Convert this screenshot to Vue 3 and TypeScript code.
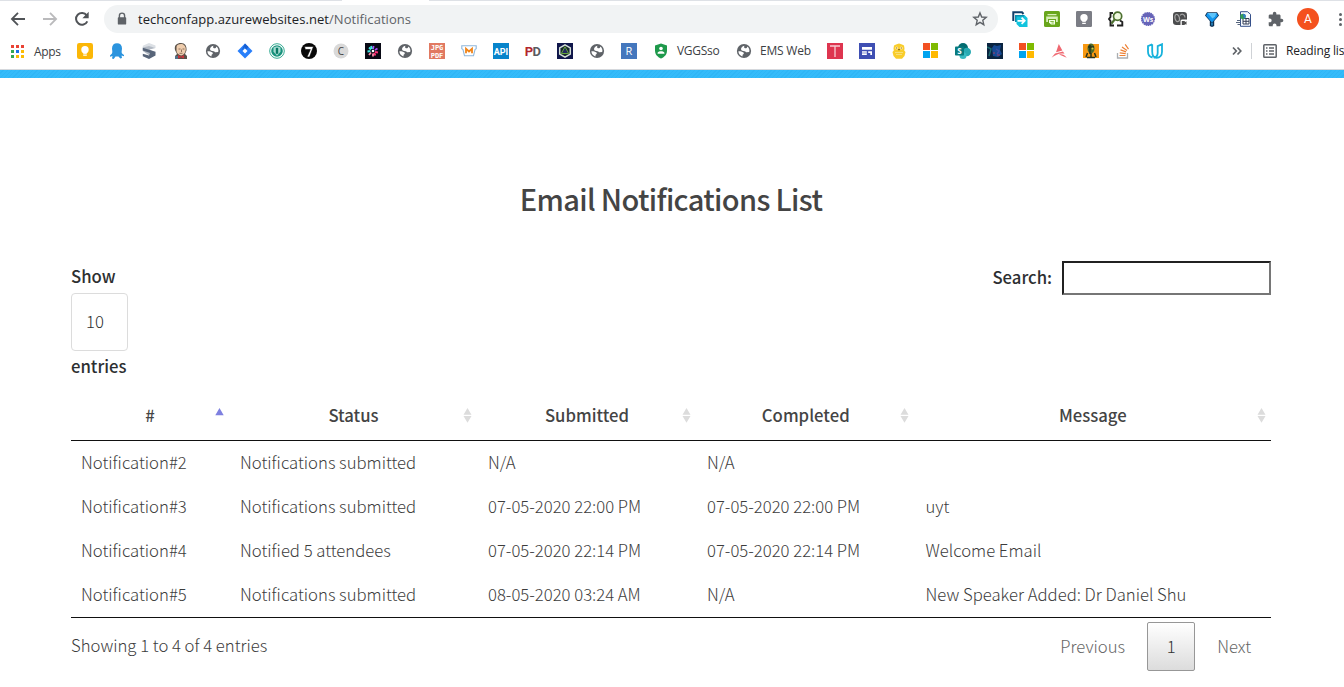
<script setup lang="ts">
interface Notification {
  id: string
  status: string
  submitted: string
  completed: string
  message: string
}

const columns = [
  { label: '#', cls: 'c-id', sorted: true },
  { label: 'Status', cls: 'c-status', sorted: false },
  { label: 'Submitted', cls: 'c-date', sorted: false },
  { label: 'Completed', cls: 'c-done', sorted: false },
  { label: 'Message', cls: 'c-msg', sorted: false },
]

const rows: Notification[] = [
  { id: 'Notification#2', status: 'Notifications submitted', submitted: 'N/A', completed: 'N/A', message: '' },
  { id: 'Notification#3', status: 'Notifications submitted', submitted: '07-05-2020 22:00 PM', completed: '07-05-2020 22:00 PM', message: 'uyt' },
  { id: 'Notification#4', status: 'Notified 5 attendees', submitted: '07-05-2020 22:14 PM', completed: '07-05-2020 22:14 PM', message: 'Welcome Email' },
  { id: 'Notification#5', status: 'Notifications submitted', submitted: '08-05-2020 03:24 AM', completed: 'N/A', message: 'New Speaker Added: Dr Daniel Shu' },
]

const appDots = ['#ea4335', '#ea4335', '#ea4335', '#34a853', '#1a73e8', '#fbbc04', '#34a853', '#fbbc04', '#fbbc04']
</script>

<template>
  <div class="window">
    <svg width="0" height="0" class="defs">
      <symbol id="globe" viewBox="0 0 16 16">
        <circle cx="8" cy="8" r="7.1" fill="#5f6368" />
        <path d="M8.500 2.800C6 3.300 5 4.800 5 6.300 5.300 8 7 8.200 8.600 8.200c1 .1 1 1 2 1.100L13.200 9C13.900 7 13 4.500 11.300 3.500 11.300 5 10 5.500 9 5.300 7.900 5 7.900 3.500 8.500 2.800Z M2.400 8.300C4 8.200 6 8.500 7.500 9.500 8.200 10.300 7.700 11.300 6.800 11.500 6.400 12 6.800 12.800 6.300 13.400 4 12.700 2.400 10.800 2.400 8.300Z" fill="#fff" />
      </symbol>
      <symbol id="msft" viewBox="0 0 16 16">
        <path d="M0 0h7v7H0z" fill="#f25022" /><path d="M8 0h7v7H8z" fill="#7fba00" />
        <path d="M0 8h7v7H0z" fill="#00a4ef" /><path d="M8 8h7v7H8z" fill="#ffb900" />
      </symbol>
    </svg>

    <div class="tab-edge"><i class="edge-left"></i><i class="edge-right"></i></div>
    <header class="toolbar">
      <div class="nav">
        <svg viewBox="0 0 16 16"><path d="M15 8H2M8 1.800 1.900 8 8 14.200" fill="none" stroke="#505357" stroke-width="1.800" /></svg>
        <svg viewBox="0 0 16 16"><path d="M1 8h13M8 1.800 14.100 8 8 14.200" fill="none" stroke="#bababc" stroke-width="1.800" /></svg>
        <svg viewBox="0 0 16 16"><path d="M13.300 10.300A5.900 5.900 0 1 1 12.700 4.300" fill="none" stroke="#505357" stroke-width="2" /><path d="M14.700.8v6.400H8.400z" fill="#505357" /></svg>
      </div>
      <div class="omnibox">
        <svg class="lock" viewBox="0 0 10 14"><path d="M2.400 6V3.700a2.600 2.600 0 0 1 5.200 0V6" fill="none" stroke="#5f6368" stroke-width="1.400" /><rect x=".8" y="5.200" width="8.400" height="7.400" rx=".9" fill="#5f6368" /></svg>
        <span class="url">techconfapp.azurewebsites.net<span class="path">/Notifications</span></span>
        <svg class="star" viewBox="0 0 16 16"><path d="M8 1.900 9.700 6l4.500.4-3.400 2.900 1 4.400L8 11.400l-3.800 2.300 1-4.400L1.800 6.400 6.300 6z" fill="none" stroke="#5f6368" stroke-width="1.400" /></svg>
      </div>
      <div class="extensions">
        <svg viewBox="0 0 16 16"><path d="M1.300 10V1.300H10L11.500 3" fill="none" stroke="#123f69" stroke-width="2" /><path d="M3 4h9.500L15.500 7v9H7.500L4.500 13V11H3z" fill="#12c4de" /><path d="M3 4h9v1.500H4.500V11H3z" fill="#0b8fb0" /><path d="M5.500 9.800h7M9.600 6.700l3.100 3.100-3.100 3.100" fill="none" stroke="#fff" stroke-width="1.800" /></svg>
        <svg viewBox="0 0 16 16"><rect width="16" height="16" rx="1.500" fill="#69a61c" /><path d="M3.500 3h9v1.300h-9zM2.200 5.500h11.600V11H12V8H4v3H2.200z" fill="#d9efb9" /><path d="M5 9h6v4.500H7L5 11.500z" fill="#f4ffe8" /><path d="M6.300 10.500h3.500M7.500 12h2.300" stroke="#69a61c" stroke-width=".8" /></svg>
        <svg viewBox="0 0 16 16"><rect width="16" height="16" rx="1.200" fill="#7b7d85" /><circle cx="8" cy="6.800" r="3.700" fill="#fff" /><path d="M6.200 9.500h3.600v1.300H6.200zM6.200 11.800h3.600V13H6.200z" fill="#fff" /></svg>
        <svg viewBox="0 0 16 16"><path d="M5 2H2.500v4L1 8l1.500 2v4.500H6M12 9.500l2.300 1.500v3.500H9" fill="none" stroke="#222" stroke-width="1.900" /><circle cx="9.600" cy="5.200" r="4.100" fill="#eff8df" stroke="#4d7030" stroke-width="1.700" /><path d="M6.600 8.500 3.500 12.600" stroke="#4d7030" stroke-width="2.200" /></svg>
        <svg viewBox="0 0 16 16"><circle cx="8" cy="8" r="6.300" fill="#6664b8" stroke="#6664b8" stroke-width="1.500" stroke-dasharray="1.500 .6" /><text x="8" y="10.700" class="glyph ws">Ws</text></svg>
        <svg viewBox="0 0 16 16"><rect x="1" y="1" width="14" height="13" rx="3.200" fill="#4b4c4d" /><ellipse cx="5.200" cy="7" rx="2.200" ry="3.600" transform="rotate(-15 5.200 7)" fill="none" stroke="#a5a5a5" stroke-width="1.200" /><path d="M8 4.500c2-2.500 5-1 5 2" fill="none" stroke="#a5a5a5" stroke-width="1.200" /><rect x="8.500" y="8.500" width="7.500" height="6.500" rx="1.500" fill="#fff" /><path d="M9.800 10h3v1.200l1.700-.9v3.500l-1.700-.9V14h-3z" fill="#4b4c4d" /></svg>
        <svg viewBox="0 0 16 16"><path d="M3 1.200h10L15 4.500 10.200 10v5L8 16l-2.200-1v-5L1 4.500z" fill="#0d2f52" /><path d="M3.500 2h9l1.500 2.700L8.500 11h-1L2 4.700z" fill="#1496ee" /><path d="M3.500 2h9L11 5.500 8.500 7.500z" fill="#5cc4fb" /><path d="M7 11.500h2v3H7z" fill="#2377ac" /></svg>
        <svg viewBox="0 0 16 16"><path d="M4.500.7h7L14.500 3.300v12h-10z" fill="#f7fbff" stroke="#35508a" /><path d="M7 7.500h6V13H7z" fill="#fff" stroke="#353e57" /><path d="M10 7.500V13M7 10.300h6" stroke="#353e57" /><circle cx="7" cy="5.500" r="2.800" fill="#359b55" /><path d="M7 2.700c3 0 3.500 3 1 5z" fill="#3179d0" /><path d="M1 9.500h3.500M0 11.500h4.500M1.500 13.500h3" stroke="#56657e" /></svg>
        <svg viewBox="1 0 23 23"><path d="M20.500 11H19V7c0-1.100-.9-2-2-2h-4V3.500C13 2.120 11.880 1 10.500 1S8 2.120 8 3.500V5H4c-1.100 0-1.990.9-1.990 2v3.800H3.500c1.490 0 2.700 1.210 2.700 2.700s-1.210 2.700-2.700 2.700H2V20c0 1.100.9 2 2 2h3.800v-1.500c0-1.490 1.210-2.700 2.700-2.700s2.700 1.210 2.700 2.700V22H17c1.100 0 2-.9 2-2v-4h1.500c1.380 0 2.500-1.120 2.500-2.500S21.880 11 20.500 11z" fill="#5f6368" /></svg>
      </div>
      <div class="avatar">A</div>
      <div class="kebab"><i></i><i></i><i></i></div>
    </header>

    <nav class="bookmarks">
      <div class="apps"><div class="dots"><i v-for="(c, i) in appDots" :key="i" :style="{ background: c }"></i></div><span>Apps</span></div>
      <div class="marks">
        <svg viewBox="0 0 16 16"><rect width="16" height="16" rx="2.200" fill="#fbb707" /><circle cx="8" cy="6.700" r="3.700" fill="#fff" /><path d="M6.200 9.500h3.600v1.300H6.200zM6.200 11.500h3.600v1.300H6.200z" fill="#fff" /></svg>
        <svg viewBox="0 0 16 16"><path d="M3 5.500C3 2 5 .2 8 .2s5 1.800 5 5.300c0 2-.8 3 0 5l2 1.500v1.300l-2.500-.8.5 2.500-1.700.5L9.500 13.500H6.500l-1.800 2.500-1.700-.5.5-2.500-2.500.8V12.500l2-2c.8-2 0-3 0-5z" fill="#2b94de" /></svg>
        <svg viewBox="0 0 16 16"><path d="M8 0 14.500 2.500V5L8 3.500 1.800 4.800V2.800z" fill="#dce0e5" /><path d="M1.800 4.500 8 3l6.500 2-6 1.500 6 3.500L8 12.200 1.800 8z" fill="#b3bac4" /><path d="m1.800 4.800 12.700 4v3.700L8 16l-6.200-2.700v-2.500L8 12.500 9 10 1.800 7.500z" fill="#586579" /></svg>
        <svg viewBox="0 0 16 16"><path d="M2 7C1 2 4 0 8 0s6 3 5.500 7.500L12 11l2 2v3H2v-3l2-2z" fill="#5a5148" /><path d="M3.500 4c0-2 2-3 4.500-3s4.800 2 4.800 5-1.800 6-4.800 6.500C5.500 12 3.500 10 3.500 8z" fill="#efcdad" /><path d="M5.500 6h2M9.500 6h2M8.500 6.500v2.500M6.500 10.300h3" stroke="#8f725d" /><path d="m5 12 3 1.500 3-1.500v3.500l-3-1.200-3 1.200z" fill="#c9343b" /><path d="M2 13h3v3H2z" fill="#537188" /></svg>
        <svg><use href="#globe" /></svg>
        <svg viewBox="0 0 16 16"><path d="M8 .5 15.500 8 8 15.500.5 8z" fill="#287ffa" /><path d="m8 .5 3.500 3.500L8 7.500V4L4.500 7.500z" fill="#155fd2" /><path d="m8 5.500 2.500 2.500L8 10.500 5.500 8z" fill="#fff" /></svg>
        <svg viewBox="0 0 16 16"><circle cx="8" cy="8" r="7.300" fill="#fff" stroke="#35ab93" stroke-width="1" /><circle cx="8" cy="8" r="5.800" fill="#17927c" /><path d="M4.500 4.500 8 3.200l3.500 1.300v4.200L8 12.700 4.500 8.700z" fill="#a5dad0" /><path d="M6.800 4.800h2.400v6H6.800z" fill="#087965" /></svg>
        <svg viewBox="0 0 16 16"><circle cx="8" cy="8" r="8" fill="#080808" /><path d="M3.500 3.500h9L8.500 14H6l3.300-7.500h-5zM2.500 8h6" fill="#fff" stroke="#080808" stroke-width=".6" /></svg>
        <svg viewBox="0 0 16 16"><circle cx="8" cy="8" r="7.500" fill="#d9d9d9" /><text x="8" y="11.500" class="glyph cc">C</text></svg>
        <svg viewBox="0 0 16 16"><path d="M0 0h16v16H0z" fill="#080914" /><g stroke-width="1.800"><path d="m8 6 .6-3M10 7l2.500-1.500" stroke="#b04fff" /><path d="m10 9 3 .5M9 10l1.500 2.500" stroke="#ff3478" /><path d="M8 10.500v3M6 9.500 4 12" stroke="#ff8cab" /><path d="m5.500 8-3 .5M6 6.500 4 4.500M7 6 6 3" stroke="#42e7e3" /></g><circle cx="8" cy="8" r="1.300" fill="#fff" /></svg>
        <svg><use href="#globe" /></svg>
        <svg viewBox="0 0 16 16"><path d="M0 0h16v16H0z" fill="#e17961" /><text x="8" y="7" class="glyph tiny">JPG</text><text x="8" y="15" class="glyph tiny">PDF</text></svg>
        <svg viewBox="0 0 16 16"><path d="M.8 2.800h14.400v3l-1.200.7-1.500 6.200h-9L2 6.500.8 5.800z" fill="#fff" stroke="#8eb7dc" stroke-width="1.100" /><path d="M5 10.300V5.800l3 2.700 3-2.700v4.500" fill="none" stroke="#f18418" stroke-width="1.800" /></svg>
        <svg viewBox="0 0 16 16"><path d="M0 0h16v16H0z" fill="#0784cb" /><text x="8" y="12" class="glyph api">API</text></svg>
        <svg viewBox="0 0 16 16"><text x="4" y="13" class="glyph pd red">P</text><text x="11.800" y="13" class="glyph pd">D</text></svg>
        <svg viewBox="0 0 16 16"><path d="M0 0h16v16H0z" fill="#10174b" /><path d="m8 1.800 5.300 3.100v6.200L8 14.200l-5.300-3.100V4.900z" fill="#17282c" stroke="#d5e0d8" stroke-width="1.500" /><path d="m8 3.800 3.700 6.700H4.300z" fill="#222761" stroke="#65a63a" /></svg>
        <svg><use href="#globe" /></svg>
        <svg viewBox="0 0 16 16"><path d="M0 0h16v16H0z" fill="#4477bd" /><text x="8" y="12" class="glyph r">R</text></svg>
        <svg viewBox="0 0 16 16"><path d="m8 .5 6 2v5c0 4-2.500 6.500-6 8-3.500-1.500-6-4-6-8v-5z" fill="#1e994b" /><circle cx="8" cy="5.500" r="1.800" fill="#fff" /><path d="M4.600 10.800V9.900C4.600 7.700 11.400 7.700 11.400 9.900v.9z" fill="#fff" /></svg>
      </div>
      <span class="label vg">VGGSso</span>
      <svg class="ems-icon"><use href="#globe" /></svg>
      <span class="label ems">EMS Web</span>
      <div class="marks">
        <svg viewBox="0 0 16 16"><path d="M0 0h16v16H0z" fill="#de354f" /><path d="M3 3h10M8 3v11" stroke="#f8ccd3" stroke-width="1.300" /></svg>
        <svg viewBox="0 0 16 16"><path d="M0 0h16v16H0z" fill="#3f4fb3" /><path d="M3 4h10v2.700H3zM3 8.300h4.800V12H3zM9.200 8.300H13V12h-1.700V10H9.200z" fill="#fff" /><path d="M3 9.700h4.800v.6H3z" fill="#3f4fb3" /></svg>
        <svg viewBox="0 0 16 16"><path d="M3 2.500 5 1.500 8 .5l3 1 2 1 .5 3-.3 2L14.500 9l-1 4L11 15.700H5L2.500 13l-1-4 1.300-1.500-.3-2z" fill="#f9cd2b" /><circle cx="5.700" cy="5" r="1.500" fill="#ffeaa1" /><circle cx="10.300" cy="5" r="1.500" fill="#ffeaa1" /><path d="M5.700 4.500v1M10.300 4.500v1M7 6.700h2" stroke="#7b5c13" /><path d="M4 9.500h8M5 11.500h6" stroke="#f7df79" /></svg>
        <svg><use href="#msft" /></svg>
        <svg viewBox="0 0 16 16"><circle cx="8" cy="5" r="5" fill="#036c70" /><circle cx="11.800" cy="9" r="4.200" fill="#28aab2" /><circle cx="8" cy="12.500" r="3.500" fill="#37bac1" /><rect y="3.500" width="9" height="9" rx=".8" fill="#087b7f" /><text x="4.500" y="10.800" class="glyph sp">S</text></svg>
        <svg viewBox="0 0 16 16"><path d="M0 0h16v16H0z" fill="#0a2440" /><path d="M5 5 7 2l3 1 4-1-1 5 2 4-4 3-5-1z" fill="#164a94" /><path d="m0 4 4 2-2 7" fill="none" stroke="#1d6b70" stroke-width="1.500" /><path d="m9 6 3 2-2 3" fill="none" stroke="#3f4fa5" stroke-width="1.400" /><path d="M6 10h2M10 12h3" stroke="#a13d67" /></svg>
        <svg><use href="#msft" /></svg>
        <svg viewBox="0 0 16 16"><path d="m7.800 1 3.600 6.500L5 9.300zM4 10.500l8-2 1.500 2.300C8 9.800 5 12 .5 14.800zM8 11.500c3-.8 5.300 0 7.800 3.300z" fill="#ef6871" /></svg>
        <svg viewBox="0 0 16 16"><path d="M0 1h16v14H0z" fill="#f79811" /><ellipse cx="8" cy="5.500" rx="3.500" ry="5" fill="#4d6a2a" /><path d="M5 4h6M8 10v4M4.500 10 3 14M11.500 10l1.500 4M4 14.500h8M7 2v9" fill="none" stroke="#26331e" stroke-width="1.500" /><circle cx="9.500" cy="5.500" r="1" fill="#d0c94a" /></svg>
        <svg viewBox="0 0 16 16"><path d="M2.500 10v5h10v-5" fill="none" stroke="#aaaeb2" stroke-width="1.300" /><g stroke="#ed8135" stroke-width="1.200"><path d="M4.500 12.500h6M4.700 9.800l6 .8M5.500 6.900l5.600 2M7 4l5 3.400M10.200 1.400l3.300 4.700" /></g></svg>
        <svg viewBox="0 0 16 16"><path d="M5.200 1.300 1 3.200v5.600c0 3 1.700 5.200 4.500 5.700M5.200 1.300v7.200c0 4.500 1.500 6.300 4.500 6.300s5.300-2.300 5.300-6V1.200l-4.300 1.900v6.700c0 2.800-1.200 4.500-4 4.700" fill="none" stroke="#16b2dc" stroke-width="1.800" /></svg>
      </div>
      <svg class="more" viewBox="0 0 10 10"><path d="m1 1.500 3.300 3.500L1 8.500M5.500 1.500 8.800 5 5.500 8.500" fill="none" stroke="#5f6368" stroke-width="1.700" /></svg>
      <span class="divider"></span>
      <svg class="list-icon" viewBox="0 0 16 16"><rect x="1.800" y="1.800" width="12.400" height="12.400" rx=".8" fill="none" stroke="#5f6368" stroke-width="1.500" /><path d="M4 5h1.500M7 5h5M4 8h1.500M7 8h5M4 11h1.500M7 11h5" stroke="#5f6368" stroke-width="1.400" /></svg>
      <span class="label reading">Reading list</span>
    </nav>

    <div class="banner"></div>

    <main class="page">
      <h2>Email Notifications List</h2>
      <div class="controls">
        <label class="length">
          <span>Show</span>
          <span class="select">10</span>
          <span>entries</span>
        </label>
        <label class="search"><span>Search:</span><input type="text"></label>
      </div>
      <table>
        <thead>
          <tr>
            <th v-for="c in columns" :key="c.label" :class="c.cls">
              <div class="head">
                <i></i><span>{{ c.label }}</span>
                <svg viewBox="0 0 9 15" class="sort">
                  <path v-if="c.sorted" d="M.3 7.200 4.500 0 8.700 7.200z" fill="#7e80e0" />
                  <path v-else d="M.5 6.700 4.500 0l4 6.700zM.5 8h8l-4 6.700z" fill="#dcdcdc" />
                </svg>
              </div>
            </th>
          </tr>
        </thead>
        <tbody>
          <tr v-for="r in rows" :key="r.id">
            <td>{{ r.id }}</td><td>{{ r.status }}</td><td>{{ r.submitted }}</td><td>{{ r.completed }}</td><td>{{ r.message }}</td>
          </tr>
        </tbody>
      </table>
      <footer>
        <span class="info">Showing 1 to 4 of 4 entries</span>
        <div class="pager"><span>Previous</span><span class="current">1</span><span>Next</span></div>
      </footer>
    </main>
  </div>
</template>

<style>
html, body { overflow: hidden; background: #fff; }
</style>

<style scoped>
* { box-sizing: border-box; }
.window { width: 1344px; height: 687px; overflow: hidden; display: flex; flex-direction: column; background: #fff; font-family: "Open Sans", sans-serif; }
.defs { position: absolute; }
svg { flex: none; display: block; }

.tab-edge { display: flex; justify-content: space-between; height: 1px; flex: none; }
.tab-edge i { background: #dee1e6; }
.edge-left { width: 342px; }
.edge-right { width: 915px; }
.toolbar { height: 36px; flex: none; display: flex; align-items: center; padding-left: 10px; }
.nav { display: flex; gap: 16px; width: 94px; }
.nav svg { width: 16px; height: 16px; }
.omnibox { width: 894px; height: 28px; border-radius: 14px; background: #f1f3f4; display: flex; align-items: center; padding: 0 10px 0 13px; }
.lock { width: 10px; height: 14px; margin-right: 11px; }
.url { font-size: 13px; line-height: 20px; letter-spacing: .06px; color: #202124; flex: 1; white-space: nowrap; }
.path { color: #5f6368; }
.star { width: 16px; height: 16px; }
.extensions { display: flex; gap: 16px; margin-left: 14px; }
.extensions svg { width: 16px; height: 16px; }
.avatar { width: 22px; height: 22px; flex: none; border-radius: 50%; background: #f4511e; color: #fff; text-align: center; font: 12px/22px Roboto, sans-serif; margin-left: 13px; }
.kebab { display: flex; flex-direction: column; gap: 2px; margin-left: 20px; }
.kebab i { width: 3px; height: 3px; border-radius: 50%; background: #5f6368; }

.bookmarks { height: 33px; flex: none; border-bottom: 1px solid #d5d8dc; display: flex; align-items: center; padding: 0 0 4px 11px; font-size: 12px; color: #3c4043; white-space: nowrap; }
.bookmarks > * { flex-shrink: 0; }
.apps { width: 66px; display: flex; align-items: center; gap: 10px; letter-spacing: -.3px; }
.dots { display: grid; grid-template-columns: repeat(3, 3px); gap: 2px; }
.dots i { height: 3px; }
.marks { display: flex; gap: 16px; }
.marks svg, .ems-icon, .list-icon { width: 16px; height: 16px; }
.label { letter-spacing: -.3px; padding-bottom: 1px; }
.vg { width: 67px; padding-left: 8px; }
.ems { width: 75px; padding-left: 8px; letter-spacing: -.2px; }
.more { width: 10px; height: 10px; margin-left: 69px; }
.divider { width: 1px; height: 16px; background: #cfd2d6; margin-left: 9px; }
.list-icon { margin-left: 10px; }
.reading { padding-left: 8px; color: #202124; letter-spacing: -.15px; }

.glyph { font-family: "Open Sans", sans-serif; text-anchor: middle; fill: #fff; }
.ws { font-size: 7px; font-weight: 700; }
.cc { font-size: 10px; fill: #444; }
.tiny { font: 700 7px "DejaVu Sans Mono", monospace; }
.api { font: 700 9px Roboto, sans-serif; }
.pd { font: 700 13px Roboto, sans-serif; fill: #5a5a5f; }
.pd.red { fill: #b3262d; }
.r { font-size: 11px; }
.sp { font-size: 8px; font-weight: 700; }

.banner { height: 8px; flex: none; background: repeating-linear-gradient(135deg, #34bbfa 0 2px, #2fb6f6 2px 3px); }

.page { width: 1200px; margin-left: 71px; display: flex; flex-direction: column; font-family: "Noto Sans CJK SC", "Source Sans Pro", sans-serif; font-size: 16.700px; font-weight: 300; color: #3c3c3c; }
h2 { margin: 100px 0 0; height: 40px; font-size: 29px; line-height: 40px; font-weight: 500; letter-spacing: -.64px; text-align: center; color: #444; white-space: nowrap; }
.controls { display: flex; justify-content: space-between; align-items: flex-start; margin-top: 43px; height: 131px; font-weight: 500; color: #2d2f31; }
.length { display: flex; flex-direction: column; line-height: 30px; }
.select { width: 57px; height: 58px; margin: 2px 0 0; border: 1px solid #dcdcdc; border-radius: 4px; padding-left: 14px; line-height: 54px; font-weight: 300; }
.search { display: flex; align-items: center; gap: 10px; line-height: 30px; }
.search span { padding-bottom: 2px; }
.search input { width: 209px; height: 34px; border: 2px inset #767676; background: #fff; padding: 1px 2px; }
table { width: 1200px; table-layout: fixed; border-collapse: separate; border-spacing: 0; border-bottom: 1px solid #111; }
.c-id { width: 159px; } .c-status { width: 248px; } .c-date { width: 219px; } .c-done { width: 218.500px; } .c-msg { width: 355.500px; }
th { height: 49px; padding: 0 6.500px 1px 5.500px; border-bottom: 1px solid #111; font-weight: 500; color: #444; }
th.c-msg { padding: 0 5px 1px 4px; }
.head { display: grid; grid-template-columns: 1fr auto 1fr; align-items: center; line-height: 30px; }
.head span { padding-bottom: 1px; }
.sort { width: 9px; height: 15px; justify-self: end; }
td { height: 44px; padding: 0 10px 2px; line-height: 30px; white-space: nowrap; }
footer { display: flex; justify-content: space-between; padding-top: 4px; }
.info { line-height: 46px; }
.pager { display: flex; line-height: 49px; color: #666; }
.pager span { padding: 0 20px; }
.pager .current { width: 48px; height: 49px; padding: 0; line-height: 47px; margin: 0 2px; border: 1px solid #979797; border-radius: 2px; background: linear-gradient(#fff, #dcdcdc); color: #333; text-align: center; }
</style>
